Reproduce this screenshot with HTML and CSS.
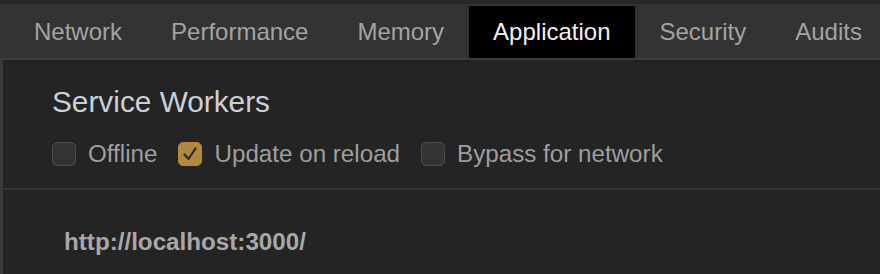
FILE: index.html
```html
<!DOCTYPE html>
<html>
<head>
<meta charset="utf-8">
<link rel="stylesheet" href="styles.css">
</head>
<body>
<div class="devtools">
  <div class="topstrip"></div>
  <nav class="tabbar">
    <div class="tab">Network</div>
    <div class="tab">Performance</div>
    <div class="tab">Memory</div>
    <div class="tab active">Application</div>
    <div class="tab">Security</div>
    <div class="tab">Audits</div>
  </nav>
  <main class="content">
    <section class="sw-section">
      <h2 class="title">Service Workers</h2>
      <div class="options">
        <label class="option"><span class="box"></span><span class="label">Offline</span></label>
        <label class="option"><span class="box checked"><svg viewBox="0 0 24 24" width="24" height="24"><polyline points="6.5,12.5 10.5,17 17.5,6.5" fill="none" stroke="#2b2b2b" stroke-width="2.2" stroke-linecap="round" stroke-linejoin="round"/></svg></span><span class="label">Update on reload</span></label>
        <label class="option"><span class="box"></span><span class="label">Bypass for network</span></label>
      </div>
    </section>
    <section class="worker">
      <div class="url">http://localhost:3000/</div>
    </section>
  </main>
</div>
</body>
</html>
```

FILE: styles.css
```css
html, body {
  margin: 0;
  padding: 0;
  background: #242424;
}
body {
  width: 880px;
  height: 274px;
  overflow: hidden;
  font-family: "Liberation Sans", Arial, sans-serif;
}
.devtools {
  display: flex;
  flex-direction: column;
  height: 274px;
}
.topstrip {
  height: 4px;
  background: #282828;
}
.tabbar {
  display: flex;
  height: 52px;
  padding: 2px 0 0 9.5px;
  background: #333333;
  border-bottom: 2px solid #3d3d3d;
}
.tab {
  padding: 0 24.5px;
  line-height: 52px;
  font-size: 24px;
  color: #a3a3a3;
  white-space: nowrap;
}
.tab.active {
  background: #000;
  color: #f2f2f2;
}
.content {
  flex: 1;
  border-left: 3px solid #3a3a3a;
  background: #242424;
}
.sw-section {
  padding: 24px 0 22px 49px;
  border-bottom: 2px solid #333333;
}
.title {
  margin: 0;
  font-weight: normal;
  font-size: 29.8px;
  line-height: 36px;
  color: #cbd0d8;
}
.options {
  display: flex;
  align-items: center;
  gap: 21px;
  margin-top: 22px;
  height: 24px;
}
.option {
  display: flex;
  align-items: center;
  gap: 12px;
}
.box {
  box-sizing: border-box;
  width: 24px;
  height: 24px;
  border-radius: 5px;
  background: #333333;
  border: 1px solid #4c4c4c;
  display: flex;
}
.box.checked {
  background: #b0883e;
  border-color: #b0883e;
}
.box svg {
  margin: -1px;
}
.label {
  font-size: 24.2px;
  line-height: 24px;
  color: #9e9e9e;
}
.worker {
  padding: 38px 0 0 61px;
}
.url {
  font-size: 24.2px;
  font-weight: bold;
  line-height: 28px;
  color: #a8a8a8;
}
```
